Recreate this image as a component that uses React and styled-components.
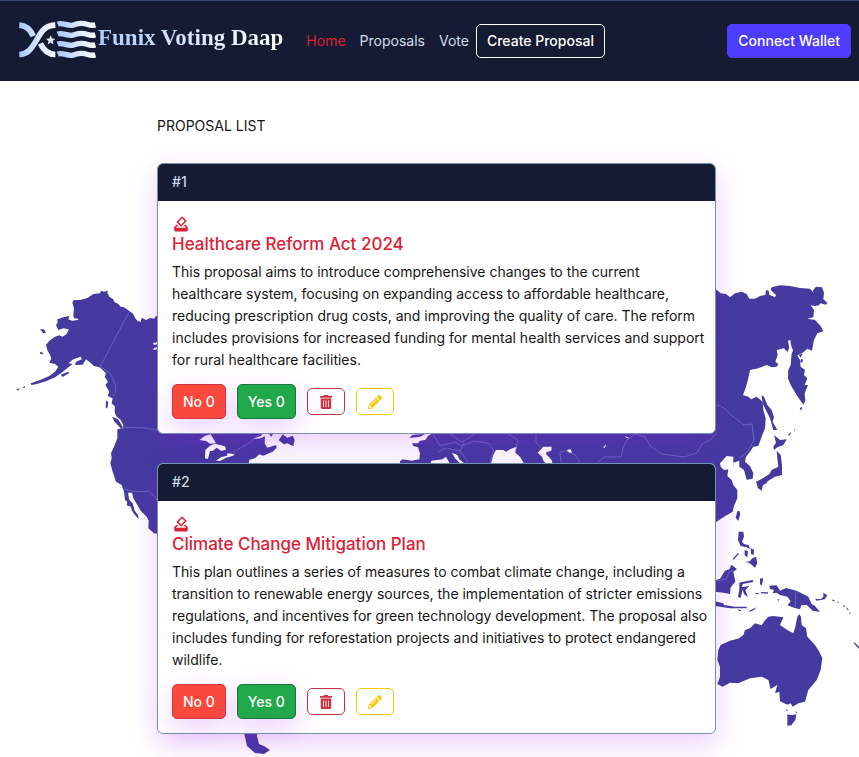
import React from "react";
import styled, { createGlobalStyle } from "styled-components";
import { MdHowToVote } from "react-icons/md";
import { FaTrashAlt, FaPencilAlt } from "react-icons/fa";

const GlobalStyle = createGlobalStyle`
  *, *::before, *::after { box-sizing: border-box; }
  body {
    margin: 0;
    background: #ffffff;
    color: #151515;
    font-family: Inter, "Liberation Sans", sans-serif;
    font-size: 14px;
    line-height: 22px;
  }
`;

const Header = styled.header`
  display: flex;
  align-items: center;
  gap: 23px;
  min-height: 81px;
  padding: 0 8px 0 19px;
  background: #141b33;
  border-top: 1px solid #3a4674;
`;

const Brand = styled.a`
  display: flex;
  align-items: center;
  gap: 2px;
  padding-bottom: 3px;
  text-decoration: none;
`;

const BrandMark = styled.svg`
  width: 77px;
  height: 39px;
`;

const BrandName = styled.span`
  padding-bottom: 4px;
  font: 700 23px/32px "Liberation Serif", serif;
  white-space: nowrap;
  color: transparent;
  background: linear-gradient(90deg, #b0ccfc, #ffffff);
  background-clip: text;
`;

const Nav = styled.nav`
  display: flex;
  align-items: center;
  gap: 14px;
`;

const NavLink = styled.a`
  color: ${(p) => (p.$active ? "#dc1f37" : "#d3dde9")};
  text-decoration: none;
  white-space: nowrap;
`;

const NavGroup = styled.div`
  display: flex;
  align-items: center;
  gap: 7px;
`;

const HeaderButton = styled.button`
  height: 34px;
  padding: 0 10px;
  border: 1px solid ${(p) => (p.$filled ? "#4e3cff" : "#ffffff")};
  border-radius: 5px;
  background: ${(p) => (p.$filled ? "#4e3cff" : "transparent")};
  color: #ffffff;
  font: inherit;
  font-weight: 500;
  white-space: nowrap;
  margin-left: ${(p) => (p.$filled ? "auto" : "0")};
`;

const Stage = styled.div`
  display: grid;
  overflow: hidden;
`;

const MapSvg = styled.svg`
  grid-area: 1 / 1;
  width: 100%;
  height: auto;
  display: block;
`;

const Main = styled.main`
  grid-area: 1 / 1;
  z-index: 1;
  display: grid;
  grid-template-columns: minmax(16px, 157fr) minmax(0, 559px) minmax(16px, 143fr);
  align-content: start;
  padding-top: 34px;
`;

const Column = styled.div`
  grid-column: 2;
`;

const PageTitle = styled.h1`
  margin: 0 0 26px;
  font-size: 14px;
  line-height: 22px;
  font-weight: 400;
`;

const List = styled.div`
  display: grid;
  gap: 29px;
`;

const Card = styled.article`
  background: #ffffff;
  border: 1px solid #7593b0;
  border-radius: 6px;
  box-shadow: 0 10px 28px rgba(160, 20, 240, 0.2);
`;

const CardHeader = styled.header`
  padding: 7px 14px 8px;
  background: #141b33;
  color: #cbd7e3;
  font-weight: 500;
  border-radius: 5px 5px 0 0;
`;

const CardBody = styled.div`
  padding: 14px 4px 14px 14px;
`;

const ProposalTitle = styled.h2`
  margin: 0 0 6px;
  color: #dc2136;
  font-size: 17px;
  line-height: 22px;
  font-weight: 500;

  svg {
    display: block;
    width: 18px;
    height: 18px;
  }
`;

const Description = styled.p`
  margin: 0 0 13px;
`;

const Actions = styled.div`
  display: flex;
  align-items: center;
  gap: 11px;
`;

const VoteButton = styled.button`
  height: 35px;
  padding: 0 10px;
  border: 1px solid ${(p) => (p.$yes ? "#19773b" : "#d03545")};
  border-radius: 5px;
  background: ${(p) => (p.$yes ? "#21a84a" : "#f9493c")};
  color: #ffffff;
  font: inherit;
  font-weight: 500;
  box-shadow: 0 10px 28px rgba(160, 20, 240, 0.2);
`;

const IconButton = styled.button`
  display: grid;
  place-items: center;
  width: 38px;
  height: 27px;
  padding: 0;
  border: 1px solid currentColor;
  border-radius: 5px;
  background: transparent;
  color: ${(p) => (p.$edit ? "#f8c80a" : "#cc3142")};
  font-size: 14px;
`;

function Logo() {
  return (
    <BrandMark viewBox="56 60 231 116" aria-hidden="true">
      <defs>
        <linearGradient id="ribbon" gradientUnits="userSpaceOnUse" x1="57" y1="0" x2="165" y2="0">
          <stop offset="0" stopColor="#a9c8ff" />
          <stop offset="1" stopColor="#ffffff" />
        </linearGradient>
        <linearGradient id="wave" gradientUnits="userSpaceOnUse" x1="172" y1="0" x2="285" y2="0">
          <stop offset="0" stopColor="#a9c8ff" />
          <stop offset="1" stopColor="#ffffff" />
        </linearGradient>
      </defs>
      <g fill="none" stroke="url(#ribbon)" strokeWidth="17">
        <path d="M57 75C78 76 90 88 99 108" />
        <path d="M120 130C130 151 143 163 165 163" />
        <path d="M57 163C82 162 92 148 109 119C126 88 137 76 165 75" />
      </g>
      <path fill="#e3edff" d="M151 105l4 10 10 1-8 7 3 10-9-6-9 6 3-10-8-7 10-1z" />
      <g fill="none" stroke="url(#wave)" strokeWidth="16">
        {[73, 103, 133, 163].map((y) => (
          <path key={y} d={`M172 ${y - 1}C186 ${y - 7} 200 ${y + 5} 217 ${y + 2}C235 ${y - 5} 250 ${y - 4} 262 ${y}Q274 ${y + 4} 285 ${y + 1}`} />
        ))}
      </g>
    </BrandMark>
  );
}

function WorldMap() {
  return (
    <MapSvg viewBox="0 81 859 676" aria-hidden="true">
      <g fill="#443a9f">
        <g transform="translate(0 270) scale(.33333)">
          <path d="M490 142L468 138 462 146 450 144 438 150 425 143 422 156 412 152 405 143 400 132 388 123 372 112 362 110 355 102 343 96 340 88 328 80 322 68 324 62 312 65 303 62 300 70 280 72 262 84 240 90 222 90 217 98 222 115 220 135 222 145 235 146 234 150 216 152 205 148 208 138 190 142 172 148 173 158 168 165 175 180 190 175 207 178 200 192 188 200 178 196 165 200 148 212 138 225 142 240 150 255 154 265 148 278 165 282 175 290 165 305 148 318 120 330 92 340 94 345 108 343 140 333 165 322 185 308 205 292 218 282 205 280 220 268 242 260 246 268 228 275 225 285 248 284 258 268 268 275 282 288 298 292 308 300 318 310 314 320 324 335 316 345 328 365 323 378 338 385 335 400 345 410 344 425 348 438 362 450 370 465 368 475 352 478 352 505 342 530 333 550 335 565 331 580 338 605 348 635 365 645 372 665 375 690 382 696 380 706 392 710 396 722 405 735 416 748 414 735 404 722 398 700 388 690 384 668 396 668 400 685 412 705 422 722 440 740 446 752 445 775 462 790 490 795Z" />
          <path d="M120 178L132 178 138 188 130 190ZM120 246l10 2-2 5-8-2ZM182 314l22-9 4 4-20 12ZM50 358l10-3-6 7ZM66 352l10-3-2 5ZM318 392l7 4-3 20-5-4ZM336 440l18 8 14 22-4 7-20-22Z" />
        </g>
        <g transform="translate(700 270) scale(.33333)">
          <path d="M20 55L48 58 62 70 78 72 90 82 105 70 125 65 140 72 148 86 165 86 180 78 196 75 198 60 206 62 208 74 225 82 228 75 212 60 215 52 240 46 270 48 300 54 330 56 342 70 338 62 348 50 366 52 372 68 370 88 382 98 378 104 362 100 356 106 345 108 332 106 342 120 340 142 322 146 345 150 362 168 370 184 352 190 342 210 336 242 322 236 306 250 292 256 300 270 302 290 315 300 312 315 322 325 314 345 324 345 314 370 316 392 310 404 300 390 290 375 272 345 264 325 265 300 272 285 275 250 279 242 273 225 271 210 264 212 268 235 262 246 252 235 230 240 233 255 226 275 235 282 230 290 215 292 200 285 175 295 150 300 145 325 138 350 129 375 145 380 153 388 170 380 188 395 190 420 197 445 195 475 185 500 175 528 160 530 150 545 138 560 135 575 150 588 160 610 158 626 140 629 132 600 118 590 118 572 100 578 92 560 82 565 78 578 62 590 72 600 85 598 82 618 95 630 100 645 112 660 112 685 102 708 98 725 70 742 45 758 20 760Z" />
          <path d="M184 376L192 380 202 405 215 420 222 442 218 455 232 480 220 480 210 445 190 405ZM222 495L240 510 260 508 250 525 232 532 222 540 220 530 228 518ZM230 542L242 555 246 585 246 615 225 620 205 632 190 640 185 662 174 655 168 635 186 626 208 612 215 600 235 590 232 565ZM188 638l16-7-4 9-11 5ZM296 255l12-4-6 12ZM302 268l7 0-2 10-6-2ZM302 412l5 0-3 8-5-2ZM264 495l7-8 2 3-6 7ZM281 479l4-2-1 5Z" />
        </g>
        <g transform="translate(700 500) scale(.33333)">
          <path d="M62 435L90 422 118 415 130 405 135 390 150 385 165 370 185 376 194 362 205 350 220 348 250 352 240 375 262 390 280 400 286 380 292 350 298 342 303 352 305 375 318 385 322 410 345 435 358 455 367 475 362 510 350 540 325 570 315 605 295 610 278 620 272 610 262 614 240 604 238 575 225 580 232 555 212 567 205 540 185 530 150 535 115 550 90 548 68 560 52 552 60 530 60 500 52 480 55 450Z" />
          <path d="M262 643L275 646 289 643 286 660 274 676 262 677ZM208 257L230 256 240 272 258 264 290 272 325 290 335 312 345 318 360 336 338 332 320 315 304 316 300 328 284 324 262 316 272 304 262 290 240 285 230 278 218 280 222 270 210 266ZM40 242L60 236 75 212 88 208 95 194 111 208 100 215 106 245 92 262 90 282 70 278 50 276 40 276ZM118 248L130 245 158 240 160 246 128 252 125 262 148 258 136 270 144 292 132 282 128 268 122 294 114 290 118 270ZM40 303L70 310 72 315 105 320 140 320 140 325 90 325 45 318ZM148 332L170 322 162 330 148 336ZM116 95L130 95 132 110 126 125 132 132 146 136 150 148 140 142 122 138 114 120ZM134 150l10 4-2 18-8-6ZM152 145l10 4-1 16-8-3ZM136 186L150 184 155 176 168 170 172 190 165 203 152 192 146 188ZM98 177L114 159 117 161 101 179ZM112 34l6-2 3 10-6 21-8-10ZM180 236l8-3 1 10-5 14-4-5ZM345 296L362 298 370 290 370 278 382 286 374 298 350 302ZM460 428l5 0 18 18-6 1ZM396 298l10 5-8 1ZM412 304l6 3-5 1ZM430 315l7 4-6 2ZM440 320l7 12-7-4ZM448 336l5 3-5 2ZM166 279l10 0 0 4-10-1ZM182 276l22 1 0 4-20-1ZM232 298l5 0-2 7ZM112 328l12 2-4 4ZM258 628l6 2-4 4ZM288 632l3 6-4 2Z" />
        </g>
        <g transform="translate(150 375) scale(.33333)">
          <path d="M0 165L340 165 334 182 308 192 332 190 345 184 344 205 352 218 378 210 380 218 368 230 340 242 328 238 315 250 298 254 294 275 0 275ZM345 168l30 0-12 18-4-8ZM386 196L398 178 412 188 428 182 434 194 430 214 412 205 402 208Z" />
          <path fill="#fff" d="M148 195L165 182 182 178 198 205 180 206 168 198ZM165 250L166 225 180 212 195 206 225 214 228 224 214 228 200 218 188 228 180 228 174 252ZM198 257L214 246 232 242 232 235 253 237 250 242 228 248 210 258Z" />
        </g>
        <g transform="translate(400 420) scale(.33333)">
          <path d="M115 30L84 48 76 60 60 62 54 70 36 70 40 78 54 82 60 100 58 118 35 122 8 118 0 124 0 140 1000 140 1000 30ZM28 54L38 44 76 42 60 50Z" />
          <path fill="#fff" d="M270 140L280 105 288 90 310 90 318 95 330 88 350 80 346 98 360 110 378 140ZM413 98L430 80 455 80 454 92 440 96 438 102 455 120 460 140 432 126 426 110ZM90 140L94 122 128 118 138 110 148 128 160 140 125 130ZM156 98L172 105 178 118 205 140 180 130 165 115ZM500 90l12-2 4 10-8 0ZM610 82l9-10-3 9-4 4ZM675 48l14 7-8 0ZM962 140L960 130 980 108 1000 110 1000 150Z" />
        </g>
        <path d="M243 728L258 728 257 736 259 744 264 746 270 750 264 754 255 753 247 746Z" />
      </g>
      <path fill="#fff" d="M158 342l-5 1 1 2 4-1ZM158 347l-4 1-1 2 5-1Z" />
      <g fill="none" stroke="#8d86d6" strokeOpacity=".55">
        <path d="M129 312L100 367Q112 372 114 382Q118 390 113 396M122 427L145 428 158 430M124 489Q138 493 148 491Q153 494 157 500" />
        <path d="M716 405Q724 406 730 414L744 425 752 424 754 440 748 451 740 458M716 581L726 579 730 571 735 571M796 591L795 607M233 452L248 444 260 434" />
        <path d="M433 434L440 446 455 442 462 446 474 441 488 443 494 450 490 462M438 452L446 448 460 451 468 462M450 434L462 442 475 434M460 451L464 443M508 434L518 440 515 452M536 434L536 442 541 448M561 462L560 452 566 451 575 455 580 462M598 462L604 457H621L623 448 627 440 635 434 645 437 650 446 662 454 684 457 697 453 702 444 710 440 716 434" />
      </g>
    </MapSvg>
  );
}

const proposals = [
  {
    id: 1,
    title: "Healthcare Reform Act 2024",
    text: "This proposal aims to introduce comprehensive changes to the current healthcare system, focusing on expanding access to affordable healthcare, reducing prescription drug costs, and improving the quality of care. The reform includes provisions for increased funding for mental health services and support for rural healthcare facilities.",
  },
  {
    id: 2,
    title: "Climate Change Mitigation Plan",
    text: "This plan outlines a series of measures to combat climate change, including a transition to renewable energy sources, the implementation of stricter emissions regulations, and incentives for green technology development. The proposal also includes funding for reforestation projects and initiatives to protect endangered wildlife.",
  },
];

function ProposalCard({ id, title, text }) {
  return (
    <Card>
      <CardHeader>#{id}</CardHeader>
      <CardBody>
        <ProposalTitle>
          <MdHowToVote aria-hidden="true" />
          {title}
        </ProposalTitle>
        <Description>{text}</Description>
        <Actions>
          <VoteButton type="button">No 0</VoteButton>
          <VoteButton type="button" $yes>Yes 0</VoteButton>
          <IconButton type="button" aria-label="Delete"><FaTrashAlt /></IconButton>
          <IconButton type="button" aria-label="Edit" $edit><FaPencilAlt /></IconButton>
        </Actions>
      </CardBody>
    </Card>
  );
}

export default function App() {
  return (
    <>
      <GlobalStyle />
      <Header>
        <Brand href="#">
          <Logo />
          <BrandName>Funix Voting Daap</BrandName>
        </Brand>
        <Nav>
          <NavLink href="#" $active>Home</NavLink>
          <NavLink href="#proposals">Proposals</NavLink>
          <NavGroup>
            <NavLink href="#vote">Vote</NavLink>
            <HeaderButton type="button">Create Proposal</HeaderButton>
          </NavGroup>
        </Nav>
        <HeaderButton type="button" $filled>Connect Wallet</HeaderButton>
      </Header>
      <Stage>
        <WorldMap />
        <Main>
          <Column>
            <PageTitle>PROPOSAL LIST</PageTitle>
            <List>
              {proposals.map((p) => (
                <ProposalCard key={p.id} {...p} />
              ))}
            </List>
          </Column>
        </Main>
      </Stage>
    </>
  );
}
